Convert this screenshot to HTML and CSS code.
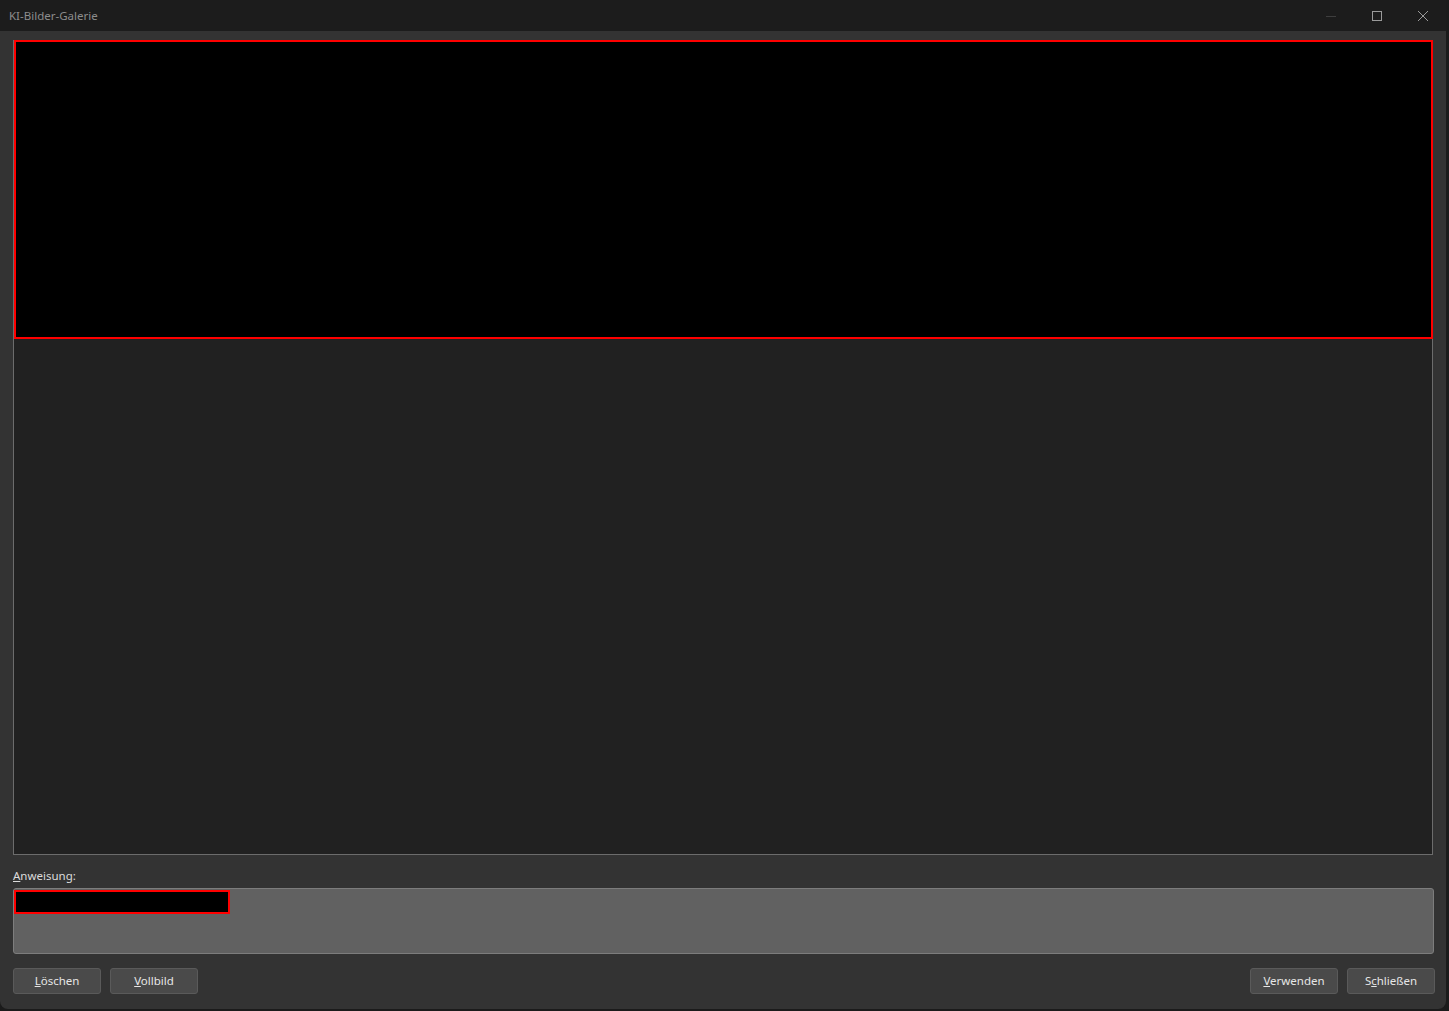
FILE: index.html
```html
<!DOCTYPE html>
<html lang="de">
<head>
    <meta charset="UTF-8">
    <title>KI-Bilder-Galerie</title>
    <link rel="stylesheet" href="styles.css">
</head>
<body>
    <div class="window">
        <div class="titlebar">
            <span class="title">KI-Bilder-Galerie</span>
            <div class="controls">
                <span class="ctl">
                    <svg width="12" height="12" viewBox="0 0 12 12"><path d="M1 6.5h10" stroke="#3e3e3e" stroke-width="1"/></svg>
                </span>
                <span class="ctl">
                    <svg width="12" height="12" viewBox="0 0 12 12"><rect x="1.5" y="1.5" width="9" height="9" fill="none" stroke="#9a9a9a" stroke-width="1"/></svg>
                </span>
                <span class="ctl">
                    <svg width="12" height="12" viewBox="0 0 12 12"><path d="M1 1l10 10M11 1L1 11" stroke="#9a9a9a" stroke-width="1"/></svg>
                </span>
            </div>
        </div>
        <div class="content">
            <div class="gallery">
                <div class="tile"></div>
            </div>
            <label class="prompt-label" for="prompt"><u>A</u>nweisung:</label>
            <div class="prompt" id="prompt">
                <div class="prompt-text"></div>
            </div>
            <div class="buttons">
                <button class="btn"><u>L</u>öschen</button>
                <button class="btn"><u>V</u>ollbild</button>
                <div class="spacer"></div>
                <button class="btn"><u>V</u>erwenden</button>
                <button class="btn">S<u>c</u>hließen</button>
            </div>
        </div>
    </div>
</body>
</html>
```

FILE: styles.css
```css
* {
    box-sizing: border-box;
}

body {
    margin: 0;
    padding: 0;
    background-color: #1b1b1b;
    font-family: "Noto Sans", "Open Sans", sans-serif;
    font-size: 11.5px;
    color: #e6e6e6;
}

.window {
    width: 1446px;
    height: 1009px;
    background-color: #333;
    border-radius: 0 0 8px 8px;
    display: flex;
    flex-direction: column;
    overflow: hidden;
}

.titlebar {
    height: 31px;
    flex: 0 0 31px;
    background-color: #1c1c1c;
    display: flex;
    align-items: center;
    padding-left: 9px;
}

.title {
    color: #8c8c8c;
    font-size: 11.5px;
}

.controls {
    margin-left: auto;
    display: flex;
    height: 100%;
    padding-right: 0;
}

.ctl {
    width: 46px;
    display: flex;
    align-items: center;
    justify-content: center;
}

.content {
    flex: 1;
    display: flex;
    flex-direction: column;
    padding: 9px 13px 0 13px;
}

.gallery {
    height: 815px;
    width: 1420px;
    border: 1px solid #6c6c6c;
    background-color: #212121;
}

.tile {
    width: 1419px;
    height: 299px;
    margin-top: -1px;
    background-color: #000;
    border: 2px solid #ff0000;
}

.prompt-label {
    margin-top: 14px;
    height: 19px;
    line-height: 14px;
    color: #dcdcdc;
}

.prompt {
    height: 66px;
    width: 1421px;
    border: 1px solid #7d7d7d;
    border-radius: 3px;
    background-color: #616161;
    padding: 1px 0 0 0;
}

.prompt-text {
    width: 216px;
    height: 24px;
    background-color: #000;
    border: 2px solid #ff0000;
}

.buttons {
    display: flex;
    gap: 9px;
    margin-top: 14px;
    margin-right: -2px;
}

.spacer {
    flex: 1;
}

.btn {
    width: 88px;
    height: 26px;
    background-color: #4a4a4a;
    border: 1px solid #5a5a5a;
    border-radius: 3px;
    color: #e6e6e6;
    font-family: "Noto Sans", "Open Sans", sans-serif;
    font-size: 11.5px;
    padding: 0 0 2px 0;
}
```
